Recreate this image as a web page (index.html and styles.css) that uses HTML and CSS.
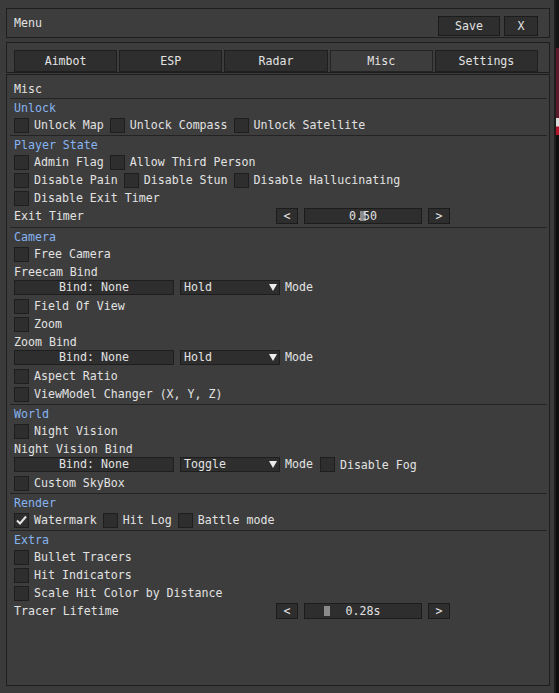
FILE: index.html
```html
<!DOCTYPE html>
<html lang="en">
<head>
  <meta charset="UTF-8">
  <title>Menu</title>
  <link rel="stylesheet" href="styles.css">
</head>
<body>
  <div class="window">
    <div class="panel header">
      <span>Menu</span>
      <div class="header-actions">
        <button class="btn save">Save</button>
        <button class="btn close">X</button>
      </div>
    </div>

    <div class="panel tabs">
      <button class="tab">Aimbot</button>
      <button class="tab">ESP</button>
      <button class="tab">Radar</button>
      <button class="tab active">Misc</button>
      <button class="tab">Settings</button>
    </div>

    <div class="panel content">
      <div class="content-title">Misc</div>

      <div class="section">
        <div class="section-title">Unlock</div>
        <div class="row row-check">
          <label class="check"><span class="box"></span>Unlock Map</label>
          <label class="check"><span class="box"></span>Unlock Compass</label>
          <label class="check"><span class="box"></span>Unlock Satellite</label>
        </div>
      </div>

      <div class="section">
        <div class="section-title">Player State</div>
        <div class="row row-check">
          <label class="check"><span class="box"></span>Admin Flag</label>
          <label class="check"><span class="box"></span>Allow Third Person</label>
        </div>
        <div class="row row-check">
          <label class="check"><span class="box"></span>Disable Pain</label>
          <label class="check"><span class="box"></span>Disable Stun</label>
          <label class="check"><span class="box"></span>Disable Hallucinating</label>
        </div>
        <div class="row row-check">
          <label class="check"><span class="box"></span>Disable Exit Timer</label>
        </div>
        <div class="row row-slider">
          <span class="slider-label">Exit Timer</span>
          <span class="arrow-btn">&lt;</span>
          <span class="track"><span class="knob" style="left: 55px"></span><span class="value">0.50</span></span>
          <span class="arrow-btn">&gt;</span>
        </div>
      </div>

      <div class="section">
        <div class="section-title">Camera</div>
        <div class="row row-check">
          <label class="check"><span class="box"></span>Free Camera</label>
        </div>
        <div class="row row-text">Freecam Bind</div>
        <div class="row row-bind">
          <span class="bind">Bind: None</span>
          <span class="combo">Hold<span class="arrow"></span></span>
          <span class="mode">Mode</span>
        </div>
        <div class="row row-check">
          <label class="check"><span class="box"></span>Field Of View</label>
        </div>
        <div class="row row-check">
          <label class="check"><span class="box"></span>Zoom</label>
        </div>
        <div class="row row-text">Zoom Bind</div>
        <div class="row row-bind">
          <span class="bind">Bind: None</span>
          <span class="combo">Hold<span class="arrow"></span></span>
          <span class="mode">Mode</span>
        </div>
        <div class="row row-check">
          <label class="check"><span class="box"></span>Aspect Ratio</label>
        </div>
        <div class="row row-check">
          <label class="check"><span class="box"></span>ViewModel Changer (X, Y, Z)</label>
        </div>
      </div>

      <div class="section">
        <div class="section-title">World</div>
        <div class="row row-check">
          <label class="check"><span class="box"></span>Night Vision</label>
        </div>
        <div class="row row-text">Night Vision Bind</div>
        <div class="row row-bind">
          <span class="bind">Bind: None</span>
          <span class="combo">Toggle<span class="arrow"></span></span>
          <span class="mode">Mode</span>
          <label class="check"><span class="box"></span>Disable Fog</label>
        </div>
        <div class="row row-check">
          <label class="check"><span class="box"></span>Custom SkyBox</label>
        </div>
      </div>

      <div class="section">
        <div class="section-title">Render</div>
        <div class="row row-check">
          <label class="check"><span class="box checked"><svg viewBox="0 0 13 13" width="13" height="13"><polyline points="2,6.5 5,9.5 11,2.5" fill="none" stroke="#e4e4e4" stroke-width="2"/></svg></span>Watermark</label>
          <label class="check"><span class="box"></span>Hit Log</label>
          <label class="check"><span class="box"></span>Battle mode</label>
        </div>
      </div>

      <div class="section">
        <div class="section-title">Extra</div>
        <div class="row row-check">
          <label class="check"><span class="box"></span>Bullet Tracers</label>
        </div>
        <div class="row row-check">
          <label class="check"><span class="box"></span>Hit Indicators</label>
        </div>
        <div class="row row-check">
          <label class="check"><span class="box"></span>Scale Hit Color by Distance</label>
        </div>
        <div class="row row-slider">
          <span class="slider-label">Tracer Lifetime</span>
          <span class="arrow-btn">&lt;</span>
          <span class="track"><span class="knob" style="left: 19px"></span><span class="value">0.28s</span></span>
          <span class="arrow-btn">&gt;</span>
        </div>
      </div>
    </div>
  </div>
</body>
</html>
```

FILE: styles.css
```css
body {
  margin: 0;
  width: 559px;
  height: 693px;
  overflow: hidden;
  font-family: "DejaVu Sans Mono", monospace;
  font-size: 11.6px;
  color: #e2e2e2;
  background: linear-gradient(to bottom, #141414 0, #141414 48px, #5a1a2c 48px, #5a1a2c 118px, #dcdcdc 118px, #dcdcdc 126px, #b3122a 127px, #b3122a 135px, #0e0e0e 135px);
}
.window {
  width: 556px;
  height: 693px;
  box-sizing: border-box;
  background: #3b3b3b;
  border-right: 2px solid #1d1d1d;
  padding: 8px 4px 7px 6px;
  display: flex;
  flex-direction: column;
}
.panel {
  border: 1px solid #1e1e1e;
  background: #3d3d3d;
}
button {
  font: inherit;
  color: inherit;
  padding: 0;
  cursor: pointer;
}

/* header */
.header {
  height: 30px;
  box-sizing: border-box;
  display: flex;
  align-items: center;
  justify-content: space-between;
  padding: 0 11px 0 7px;
}
.header-actions {
  display: flex;
  gap: 4px;
  align-self: flex-end;
  margin-bottom: 1px;
}
.btn {
  height: 20px;
  box-sizing: border-box;
  border: 1px solid #1c1c1c;
  background: #2e2e2e;
}
.save {
  width: 62px;
}
.close {
  width: 34px;
}

/* tabs */
.tabs {
  margin-top: 4px;
  height: 31px;
  box-sizing: border-box;
  padding: 7px 11px 0 7px;
  display: flex;
  gap: 2px;
}
.tab {
  flex: 1;
  height: 22px;
  box-sizing: border-box;
  border: 1px solid #1f1f1f;
  background: #2e2e2e;
}
.tab.active {
  background: #3d3d3d;
  border-color: #242424;
}

/* content */
.content {
  margin-top: 1px;
  flex: 1;
  box-sizing: border-box;
  padding: 6px 2px 0 3px;
}
.content-title {
  height: 16px;
  box-sizing: border-box;
  padding: 1px 0 0 4px;
  line-height: 15px;
}
.section {
  margin-top: 1px;
  border-top: 1px solid #232323;
  padding-left: 4px;
}
.section-title {
  height: 17px;
  box-sizing: border-box;
  padding-top: 1px;
  line-height: 16px;
  color: #86b4f0;
}
.row {
  display: flex;
  align-items: center;
  white-space: pre;
}
.row-check {
  height: 18px;
}
.row-text {
  height: 17px;
}
.row-bind {
  height: 17px;
  align-items: flex-start;
}
.row-slider {
  height: 19px;
  align-items: flex-start;
}

/* checkbox */
.check {
  display: flex;
  align-items: center;
  margin-right: 6px;
}
.box {
  width: 15px;
  height: 15px;
  box-sizing: border-box;
  border: 1px solid #1e1e1e;
  background: #2e2e2e;
  margin-right: 5px;
  display: flex;
}
.row-bind .check {
  height: 15px;
}

/* bind + combo */
.bind {
  width: 160px;
  height: 15px;
  box-sizing: border-box;
  border: 1px solid #1e1e1e;
  background: #2e2e2e;
  text-align: center;
  line-height: 13px;
  margin-right: 6px;
}
.combo {
  width: 100px;
  height: 15px;
  box-sizing: border-box;
  border: 1px solid #1e1e1e;
  background: #2e2e2e;
  line-height: 13px;
  padding: 0 2px 0 3px;
  margin-right: 5px;
  display: flex;
  justify-content: space-between;
  align-items: center;
}
.arrow {
  width: 0;
  height: 0;
  border-left: 4px solid transparent;
  border-right: 4px solid transparent;
  border-top: 7px solid #ececec;
}
.mode {
  line-height: 15px;
  margin-right: 7px;
}

/* slider */
.slider-label {
  width: 262px;
  line-height: 16px;
  margin-top: 1px;
}
.arrow-btn {
  width: 22px;
  height: 16px;
  box-sizing: border-box;
  border: 1px solid #1c1c1c;
  background: #2e2e2e;
  text-align: center;
  line-height: 14px;
  margin-top: 1px;
}
.track {
  position: relative;
  width: 118px;
  height: 16px;
  box-sizing: border-box;
  border: 1px solid #1c1c1c;
  background: #2e2e2e;
  text-align: center;
  line-height: 14px;
  margin: 1px 6px 0;
}
.knob {
  position: absolute;
  top: 2px;
  width: 6px;
  height: 10px;
  background: #8a8a8a;
}
.value {
  position: relative;
}
```
